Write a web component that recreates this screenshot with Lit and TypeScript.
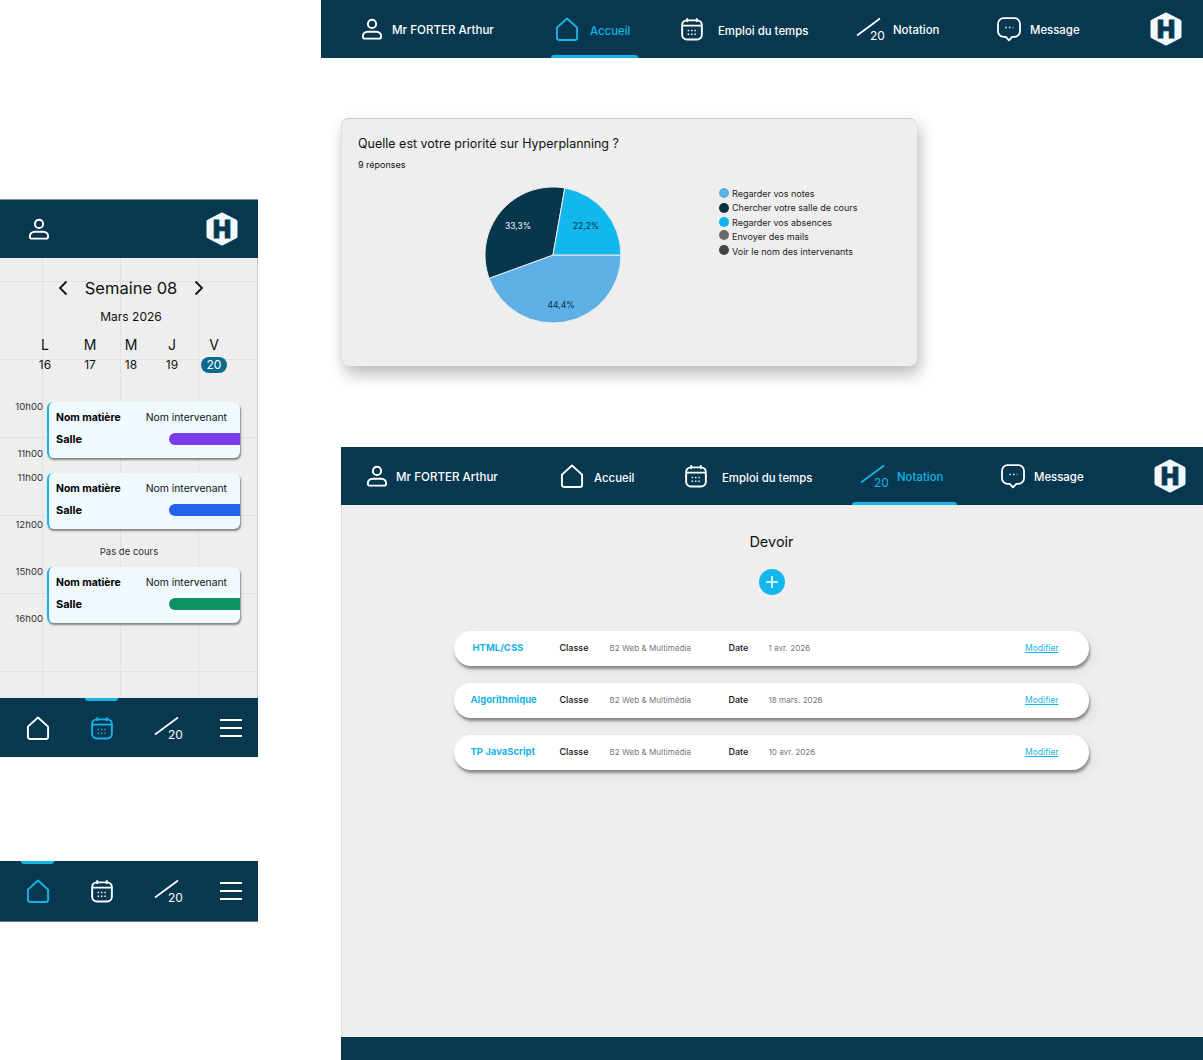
import { LitElement, html, css } from "lit";
import { customElement } from "lit/decorators.js";

const userIcon = html`<svg class="ic" width="22" height="22" viewBox="0 0 24 24" fill="none" stroke="currentColor" stroke-width="2.100"><circle cx="12" cy="6.500" r="4.500"/><path d="M2 20.200c0-3.200 2.400-5.200 5.400-5.200h9.200c3 0 5.400 2 5.400 5.200 0 1.400-.7 2.300-2 2.300H4c-1.300 0-2-.9-2-2.300z"/></svg>`;
const homeIcon = html`<svg class="ic" width="22" height="24" viewBox="0 0 24 26" fill="none" stroke="currentColor" stroke-width="2.100" stroke-linejoin="round"><path d="M12 1.500 23 11.500V22.500a2.500 2.500 0 0 1-2.500 2.500H3.500A2.500 2.500 0 0 1 1 22.500V11.500z"/></svg>`;
const calIcon = html`<svg class="ic" width="22" height="24" viewBox="0 0 23 24" fill="none" stroke="currentColor" stroke-width="2"><rect x="1.200" y="3" width="20.600" height="20" rx="5"/><path d="M1.500 8.500h20M6.500 .8v4M16.500 .8v4"/><path stroke-width="1.500" stroke-dasharray="1.500 2" d="M7 13.500h9.500M7 17.500h9.500"/></svg>`;
const fracIcon = html`<svg class="ic frac" width="28" height="24" viewBox="0 0 28 24"><path d="M1 18.500 24 1.500" stroke="currentColor" stroke-width="1.700" fill="none"/><text x="14" y="22.500" class="twenty">20</text></svg>`;
const msgIcon = html`<svg class="ic" width="24" height="25" viewBox="0 0 24 25" fill="none" stroke="currentColor" stroke-width="1.800" stroke-linejoin="round"><path d="M6.500 1.200h11a5.500 5.500 0 0 1 5.500 5.500v7.600a5.500 5.500 0 0 1-5.500 5.500h-2.300L12 23.300l-3.200-3.500H6.500A5.500 5.500 0 0 1 1 14.300V6.700a5.500 5.500 0 0 1 5.500-5.500z"/><path stroke-width="1.500" stroke-dasharray="1.400 2.300" d="M8.300 10.500h8"/></svg>`;
const burgerIcon = html`<svg class="ic" width="22" height="20" viewBox="0 0 22 20" stroke="currentColor" stroke-width="1.800"><path d="M0 2h22M0 10h22M0 18h22"/></svg>`;
const logo = html`<svg class="logo" width="32" height="34" viewBox="0 0 32 34"><polygon points="16,2.500 29.500,9.500 29.500,24.500 16,31.500 2.500,24.500 2.500,9.500" fill="#f1f9fe" stroke="#f1f9fe" stroke-width="4" stroke-linejoin="round"/><text x="16" y="25.500" class="logoH">H</text></svg>`;
const chevL = html`<svg width="10" height="16" viewBox="0 0 10 16" fill="none" stroke="#111" stroke-width="1.800"><path d="M8.500 1.500 2 8l6.500 6.500"/></svg>`;
const chevR = html`<svg width="10" height="16" viewBox="0 0 10 16" fill="none" stroke="#111" stroke-width="1.800"><path d="M1.500 1.500 8 8l-6.500 6.500"/></svg>`;

const navItems = [
  { id: "accueil", label: "Accueil", icon: homeIcon },
  { id: "emploi", label: "Emploi du temps", icon: calIcon },
  { id: "notation", label: "Notation", icon: fracIcon },
  { id: "message", label: "Message", icon: msgIcon },
];

const days = [["L", "16"], ["M", "17"], ["M", "18"], ["J", "19"], ["V", "20"]];
const courses = [
  { from: "10h00", to: "11h00", color: "#7c3aed" },
  { from: "11h00", to: "12h00", color: "#2563eb" },
  { gap: true },
  { from: "15h00", to: "16h00", color: "#0e9161" },
];
const legend = [
  ["#5cafe5", "Regarder vos notes", ""],
  ["#08323f", "Chercher votre salle de cours", ""],
  ["#10b5ee", "Regarder vos absences", ""],
  ["#6a6a6a", "Envoyer des mails", "up"],
  ["#444444", "Voir le nom des intervenants", "up"],
];
const devoirs = [
  ["HTML/CSS", "1 avr. 2026", "pad"],
  ["Algorithmique", "18 mars. 2026", ""],
  ["TP JavaScript", "10 avr. 2026", ""],
];

@customElement("app-root")
export class AppRoot extends LitElement {
  static styles = css`
    :host { display: block; position: relative; width: 1203px; height: 1060px; overflow: hidden; background: #fff; font-family: "Inter", "Liberation Sans", sans-serif; color: #111; }
    .ic { display: block; flex: none; overflow: visible; }
    .twenty { font: 400 12px "Inter", sans-serif; fill: currentColor; }
    .logoH { font: 900 24px "Inter", sans-serif; fill: #08384f; text-anchor: middle; stroke: #08384f; stroke-width: .8px; }
    .logo { display: block; }

    .nav { display: grid; align-items: center; height: 58px; background: #08384f; color: #fff; }
    .nav.top { position: absolute; left: 321px; top: 0; width: 882px; padding-left: 40px; box-sizing: border-box; grid-template-columns: 190px 130px 175px 141px 153px 32px; }
    .nav.inner { padding-left: 25px; grid-template-columns: 195px 124px 167px 149px 153px 32px; flex: none; }
    .nav-user { display: flex; align-items: center; gap: 9px; font-size: 11.600px; font-weight: 500; }
    .nav-user span { margin-top: 1px; }
    .inner .nav-user { gap: 8px; }
    .nav-item { position: relative; display: flex; align-items: center; height: 58px; font-size: 11.400px; font-weight: 500; box-sizing: border-box; }
    .nav-item .lab { white-space: nowrap; }
    .accueil { gap: 12px; } .emploi { gap: 15px; } .notation { gap: 9px; } .message { gap: 9px; }
    .accueil .lab, .emploi .lab { margin-top: 3px; }
    .notation .lab, .message .lab { margin-top: 1px; }
    .nav-item.on { color: #16b4e6; }
    .nav-item.on::after { content: ""; position: absolute; left: 0; bottom: 0; height: 3px; background: #16b4e6; border-radius: 3px 3px 0 0; }
    .top .accueil { padding-left: 5px; width: 87px; }
    .top .accueil::after { width: 87px; }
    .inner .accueil { gap: 11px; }
    .inner .notation { padding-left: 8px; width: 105px; }
    .inner .notation::after { width: 105px; }

    .mobile { position: absolute; left: 0; top: 199px; width: 258px; height: 559px; display: flex; flex-direction: column; }
    .m-head { flex: none; height: 59px; background: #08384f; color: #fff; display: flex; align-items: center; justify-content: space-between; padding: 0 20px 0 28px; border-top: 1px solid #7b8f9b; box-sizing: border-box; }
    .m-body { flex: none; height: 440px; background-color: #eeeeee; border-right: 1px solid #c9c9c9; box-sizing: border-box; position: relative; }
    .lines { position: absolute; inset: 0; background-image: linear-gradient(to right, #e1e1e1 1px, transparent 1px), linear-gradient(to bottom, #e1e1e1 1px, transparent 1px); background-size: 78px 78px; background-position: 42px 23px; }
    .m-content { position: relative; padding-top: 20px; }
    .week { display: flex; justify-content: center; align-items: center; gap: 11px; height: 20px; font-size: 16.500px; font-weight: 400; margin-left: 5px; }
    .week .t { width: 104px; text-align: center; white-space: nowrap; }
    .month { text-align: center; font-size: 12px; margin-top: 11px; height: 16px; line-height: 16px; margin-left: 5px; }
    .days { display: grid; grid-template-columns: 44px 46px 36px 46px 38px; padding-left: 23px; margin-top: 11px; justify-items: center; }
    .dl { font-size: 14px; line-height: 18px; text-align: center; }
    .dn { font-size: 12px; line-height: 16px; margin-top: 3px; text-align: center; }
    .dn.cur { background: #0b6a8d; color: #fff; width: 26px; border-radius: 8px; }
    .courses { margin-top: 29px; display: flex; flex-direction: column; }
    .row { display: grid; grid-template-columns: 47px 193px; grid-template-rows: 56px; height: 56px; margin-bottom: 15px; }
    .times { display: flex; flex-direction: column; justify-content: space-between; align-items: flex-end; padding-right: 4px; margin-top: -1px; height: 58px; font-size: 9.600px; color: #333; }
    .card { position: relative; background: #f0f9fe; border-left: 2px solid #16b4e6; border-radius: 6px; box-shadow: 1px 2px 2px rgba(0,0,0,.45); padding: 9px 0 0 7px; box-sizing: border-box; overflow: hidden; }
    .card-l1 { display: flex; justify-content: space-between; padding-right: 13px; font-size: 10.400px; line-height: 14px; }
    .b { font-weight: 700; color: #000; }
    .card-l2 { display: flex; justify-content: space-between; align-items: center; margin-top: 7px; font-size: 11px; }
    .pill { width: 71px; height: 12px; border-radius: 6px 0 0 6px; }
    .gap { height: 22px; margin-top: 1px; padding-right: 2px; text-align: center; font-size: 9.500px; line-height: 14px; color: #333; width: 258px; }

    .tabs { position: relative; flex: none; height: 59px; background: #08384f; color: #fff; display: grid; grid-template-columns: 64px 63px 66px 22px; padding-left: 27px; align-items: center; }
    .tabs.alone { position: absolute; left: 0; top: 861px; width: 258px; height: 61px; box-sizing: border-box; border-bottom: 1px solid #5f7a88; }
    .tab { position: relative; display: flex; height: 100%; align-items: center; }
    .tab.on { color: #16b4e6; }
    .tab.on::before { content: ""; position: absolute; top: 0; left: -6px; width: 33px; height: 3px; background: #16b4e6; border-radius: 0 0 3px 3px; }

    .chart { position: absolute; left: 341px; top: 118px; width: 576px; height: 248px; box-sizing: border-box; background: #eeeeee; border-radius: 8px; border-top: 1px solid #cfcfcf; border-left: 1px solid #dcdcdc; box-shadow: 3px 8px 16px rgba(0,0,0,.28); padding: 16px 0 0 16px; }
    .c-title { font-size: 12.500px; line-height: 18px; }
    .c-sub { font-size: 9px; line-height: 12px; margin-top: 6px; }
    .c-body { display: flex; margin-top: 15px; }
    .pie { margin-left: 126px; flex: none; display: block; }
    .pie text { font: 400 8.500px "Inter", sans-serif; text-anchor: middle; }
    .legend { list-style: none; margin: 0 0 0 97px; padding: 0; display: flex; flex-direction: column; gap: 0; }
    .legend li { display: flex; align-items: center; gap: 3px; height: 14.500px; font-size: 9px; color: #222; white-space: nowrap; }
    .dot { width: 10px; height: 10px; border-radius: 50%; flex: none; }
    .up .dot { margin-top: -3px; }

    .page { position: absolute; left: 341px; top: 447px; width: 862px; height: 613px; display: flex; flex-direction: column; background: #eeeeee; }
    .p-body { flex: 1; display: flex; flex-direction: column; align-items: center; border-left: 1px solid #dcdcdc; padding-top: 27px; box-sizing: border-box; }
    .p-title { font-size: 14.500px; line-height: 20px; margin-left: -2px; }
    .plus { width: 26px; height: 26px; border-radius: 50%; background: #12b8ec; margin: 17px 0 0 -2px; display: flex; align-items: center; justify-content: center; }
    .list { display: flex; flex-direction: column; gap: 17px; margin: 36px 0 0 -3px; width: 635px; }
    .dv { height: 35px; background: #fff; border-radius: 17px; box-shadow: 1px 3px 3px rgba(0,0,0,.4), 4px 6px 14px rgba(0,0,0,.06); display: grid; grid-template-columns: 105px 50px 119px 40px 1fr auto; align-items: center; padding: 0 30px 2px 1px; box-sizing: border-box; font-size: 9px; white-space: nowrap; }
    .dv-name { color: #16b4e6; font-weight: 700; font-size: 9.500px; padding-left: 16px; }
    .dv-name.pad { padding-left: 18px; }
    .dv-k { color: #111; font-weight: 500; }
    .dv-v { color: #777; font-size: 8.100px; }
    .dv-a { color: #16b4e6; font-size: 8.500px; text-decoration: underline; }
    .p-foot { flex: none; height: 23px; background: #08384f; }
  `;

  private nav(cls: string, active: string) {
    return html`<div class="nav ${cls}">
      <div class="nav-user">${userIcon}<span>Mr FORTER Arthur</span></div>
      ${navItems.map(
        (n) => html`<div class="nav-item ${n.id} ${n.id === active ? "on" : ""}">${n.icon}<span class="lab">${n.label}</span></div>`
      )}
      ${logo}
    </div>`;
  }

  private tabs(active: number, cls = "") {
    const icons = [homeIcon, calIcon, fracIcon, burgerIcon];
    return html`<div class="tabs ${cls}">
      ${icons.map((ic, i) => html`<div class="tab ${i === active ? "on" : ""}">${ic}</div>`)}
    </div>`;
  }

  private mobile() {
    return html`<section class="mobile">
      <div class="m-head">${userIcon}${logo}</div>
      <div class="m-body">
        <div class="lines"></div>
        <div class="m-content">
          <div class="week">${chevL}<span class="t">Semaine 08</span>${chevR}</div>
          <div class="month">Mars 2026</div>
          <div class="days">
            ${days.map(
              ([l, n], i) => html`<div><div class="dl">${l}</div><div class="dn ${i === 4 ? "cur" : ""}">${n}</div></div>`
            )}
          </div>
          <div class="courses">
            ${courses.map((c) =>
              c.gap
                ? html`<div class="gap">Pas de cours</div>`
                : html`<div class="row">
                    <div class="times"><span>${c.from}</span><span>${c.to}</span></div>
                    <div class="card">
                      <div class="card-l1"><span class="b">Nom matière</span><span>Nom intervenant</span></div>
                      <div class="card-l2"><span class="b">Salle</span><span class="pill" style="background:${c.color}"></span></div>
                    </div>
                  </div>`
            )}
          </div>
        </div>
      </div>
      ${this.tabs(1)}
    </section>`;
  }

  private chart() {
    return html`<section class="chart">
      <div class="c-title">Quelle est votre priorité sur Hyperplanning ?</div>
      <div class="c-sub">9 réponses</div>
      <div class="c-body">
        <svg class="pie" width="138" height="138" viewBox="-69 -69 138 138">
          <path d="M0 0H68A68 68 0 0 1 -63.900 23.260Z" fill="#5cb0e6" stroke="#eee" stroke-width="1"/>
          <path d="M0 0L-63.900 23.260A68 68 0 0 1 11.800 -66.970Z" fill="#08374d" stroke="#eee" stroke-width="1"/>
          <path d="M0 0L11.800 -66.970A68 68 0 0 1 68 0Z" fill="#12b8ec" stroke="#eee" stroke-width="1"/>
          <text x="-35" y="-26" fill="#e8f2f7">33,3%</text>
          <text x="33" y="-26" fill="#0b2b3c">22,2%</text>
          <text x="8" y="53" fill="#0b2b3c">44,4%</text>
        </svg>
        <ul class="legend">
          ${legend.map(([c, t, u]) => html`<li class="${u}"><span class="dot" style="background:${c}"></span><span>${t}</span></li>`)}
        </ul>
      </div>
    </section>`;
  }

  private page() {
    return html`<section class="page">
      ${this.nav("inner", "notation")}
      <div class="p-body">
        <div class="p-title">Devoir</div>
        <div class="plus"><svg width="12" height="12" viewBox="0 0 12 12" stroke="#fff" stroke-width="1.600"><path d="M6 0v12M0 6h12"/></svg></div>
        <div class="list">
          ${devoirs.map(
            ([n, d, p]) => html`<div class="dv">
              <span class="dv-name ${p}">${n}</span>
              <span class="dv-k">Classe</span>
              <span class="dv-v">B2 Web &amp; Multimédia</span>
              <span class="dv-k">Date</span>
              <span class="dv-v">${d}</span>
              <span class="dv-a">Modifier</span>
            </div>`
          )}
        </div>
      </div>
      <div class="p-foot"></div>
    </section>`;
  }

  render() {
    return html`
      ${this.nav("top", "accueil")}
      ${this.mobile()}
      ${this.tabs(0, "alone")}
      ${this.chart()}
      ${this.page()}
    `;
  }
}
